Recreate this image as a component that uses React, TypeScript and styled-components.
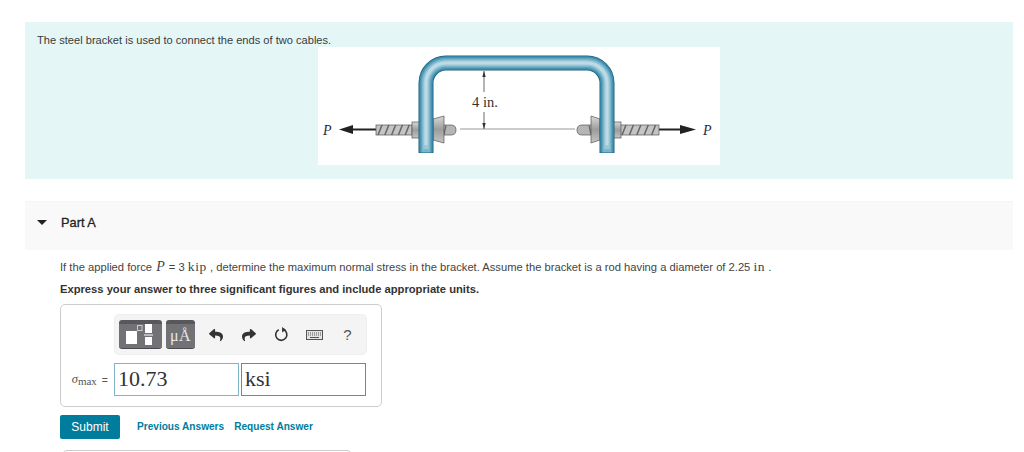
import React from "react";
import styled, { createGlobalStyle } from "styled-components";
import { FaReply, FaShare } from "react-icons/fa";

const Global = createGlobalStyle`
  html, body { margin: 0; padding: 0; background: #fff; overflow: hidden; }
  body { font-family: "Liberation Sans", Arial, sans-serif; color: #333; }
`;

const Page = styled.div`
  width: 988px;
  height: 452px;
  padding: 22px 0 0 25px;
  overflow: hidden;
`;

const Intro = styled.section`
  height: 157px;
  box-sizing: border-box;
  padding-top: 12px;
  background: #e5f6f7;
`;

const IntroText = styled.p`
  margin: 0 0 0 12px;
  font-size: 11.1px;
  line-height: 13px;
  color: #3a3a3a;
`;

const Figure = styled.svg`
  display: block;
  width: 402px;
  height: 118px;
  margin: 0 auto;
  background: #fff;
`;

const PartHeader = styled.header`
  display: flex;
  align-items: center;
  height: 49px;
  margin-top: 22px;
  background: #f9f9f9;
  border-top: 1px solid #f4f4f4;
  box-sizing: border-box;
  padding: 0 0 7px 12px;
`;

const Caret = styled.span`
  width: 0;
  height: 0;
  border-left: 5px solid transparent;
  border-right: 5px solid transparent;
  border-top: 5px solid #222;
`;

const PartTitle = styled.h2`
  margin: 0 0 0 14px;
  font-size: 12.8px;
  font-weight: 400;
  color: #222;
  -webkit-text-stroke: 0.3px #222;
`;

const PartBody = styled.div`
  padding: 10px 0 0 35px;
`;

const Question = styled.p`
  margin: 0;
  font-size: 11.2px;
  line-height: 13px;
  color: #444;
`;

const MathVar = styled.span`
  margin: 0 1px;
  font-family: "Liberation Serif", serif;
  font-style: italic;
  font-size: 14px;
`;

const MathUnit = styled.span`
  font-family: "Liberation Serif", serif;
  font-size: 13.5px;
  letter-spacing: 0.6px;
`;

const Instruction = styled.p`
  margin: 9px 0 0;
  font-size: 11.2px;
  font-weight: 700;
  line-height: 13px;
  color: #333;
`;

const Card = styled.div`
  box-sizing: border-box;
  width: 322px;
  height: 103px;
  margin-top: 8px;
  padding: 9px 13px 0 53px;
  border: 1px solid #ccc;
  border-radius: 5px;
`;

const Toolbar = styled.div`
  display: flex;
  align-items: center;
  box-sizing: border-box;
  width: 253px;
  height: 41px;
  padding: 0 4px;
  background: #f4f4f4;
  border: 1px solid #eee;
  border-radius: 5px;
`;

const TemplateButton = styled.div<{ $w: number }>`
  position: relative;
  flex: none;
  box-sizing: border-box;
  width: ${(p) => p.$w}px;
  height: 29px;
  margin-right: 4px;
  background: linear-gradient(#58585c 0, #58585c 4px, #727276 4px, #727276 100%);
  border-bottom: 1px solid #4a4a4e;
  border-radius: 3px;
  color: #eee;
  overflow: hidden;
`;

const Micro = styled.span`
  position: absolute;
  inset: 4px 0 0;
  display: flex;
  align-items: center;
  justify-content: center;
  font-family: "Liberation Serif", serif;
  font-size: 16px;
  letter-spacing: 0.5px;
  color: #e6e6e6;
`;

const Tools = styled.div`
  display: flex;
  flex: none;
  width: 165px;
`;

const Tool = styled.span`
  flex: 1;
  display: flex;
  align-items: center;
  justify-content: center;
  height: 29px;
  color: #333;
  font-size: 14px;
`;

const HelpTool = styled(Tool)`
  font-size: 15px;
  color: #555;
`;

const Answer = styled.div`
  display: flex;
  margin: 8px 0 0 -44px;
`;

const SymbolLabel = styled.span`
  flex: none;
  width: 44px;
  padding-right: 6px;
  box-sizing: border-box;
  display: flex;
  align-items: center;
  justify-content: flex-end;
  font-size: 10.5px;
  color: #555;
`;

const Sigma = styled.span`
  font-family: "Liberation Serif", serif;
  font-style: italic;
  font-size: 12.5px;
`;

const Sub = styled.span`
  font-family: "Liberation Serif", serif;
  font-size: 11px;
  margin: 3px 5px 0 0;
`;

const Field = styled.div<{ $border: string }>`
  flex: none;
  box-sizing: border-box;
  width: 125px;
  height: 33px;
  margin-right: 2px;
  padding: 0 3px;
  border: 1px solid ${(p) => p.$border};
  font-family: "Liberation Serif", serif;
  font-size: 22px;
  line-height: 29px;
  color: #333;
`;

const Actions = styled.div`
  display: flex;
  align-items: center;
  margin-top: 8px;
`;

const SubmitButton = styled.button`
  width: 60px;
  height: 24px;
  padding: 0;
  border: 0;
  border-radius: 2px;
  background: #007c9d;
  color: #fff;
  font: 12px "Liberation Sans", Arial, sans-serif;
`;

const ActionLink = styled.a<{ $gap: number }>`
  margin-left: ${(p) => p.$gap}px;
  padding-bottom: 2px;
  font-size: 10.1px;
  font-weight: 700;
  color: #007c9d;
`;

const NextCard = styled.div`
  width: 288px;
  height: 10px;
  margin: 11px 0 0 2px;
  border: 1px solid #ccc;
  border-radius: 5px 5px 0 0;
`;

const Bolt = ({ x, w }: { x: number; w: number }) => (
  <g>
    <rect x={x} y={78} width={w} height={10} fill="#c4c4c4" stroke="#555" strokeWidth={0.7} />
    {Array.from({ length: 5 }).map((_, i) => (
      <path
        key={i}
        d={`M${x + 2 + (i * (w - 2)) / 5} 88L${x + 6 + (i * (w - 2)) / 5} 78`}
        stroke="#666"
        strokeWidth={1.5}
      />
    ))}
  </g>
);

const arch = (end: number) => `M108 ${end}V36A20 20 0 0 1 128 16H269A20 20 0 0 1 289 36V${end}`;

const Arch = () => (
  <g fill="none">
    <path d={arch(106)} stroke="#1f5f7c" strokeWidth={15} />
    <path d={arch(105.5)} stroke="#3f8fae" strokeWidth={13.4} />
    <path d={arch(105.5)} stroke="#5fa3bd" strokeWidth={10.5} />
    <path d={arch(105)} stroke="#7db6cb" strokeWidth={8} />
    <path d={arch(102)} stroke="#9cc9d8" strokeWidth={5.5} />
    <path d={arch(98)} stroke="#bcdbe6" strokeWidth={3} />
  </g>
);

const BracketFigure = () => (
  <Figure viewBox="0 0 402 118">
    <defs>
      <linearGradient id="nutGrad" x1="0" y1="0" x2="0" y2="1">
        <stop offset="0" stopColor="#d8d8d8" />
        <stop offset="0.5" stopColor="#9c9c9c" />
        <stop offset="1" stopColor="#c4c4c4" />
      </linearGradient>
    </defs>
    <path d="M21 82.5L35 78V81.5H58V83.5H35V87Z" fill="#222" />
    <Bolt x={58} w={36} />
    <path d="M378 82.5L362 78V81.5H341V83.5H362V87Z" fill="#222" />
    <Bolt x={302} w={39} />
    <path d="M115 78H133Q138 78 138 83Q138 88 133 88H115Z" fill="#b5b5b5" stroke="#555" strokeWidth={0.7} />
    <path d="M282 78H264Q259 78 259 83Q259 88 264 88H282Z" fill="#b5b5b5" stroke="#555" strokeWidth={0.7} />
    <path d="M128 78.5L126 87.5M271 78.5L273 87.5" stroke="#666" strokeWidth={1.2} />
    <rect x={94} y={75} width={8} height={16} fill="url(#nutGrad)" stroke="#555" strokeWidth={0.7} />
    <path d="M115 72L126 69V96L115 93Z" fill="url(#nutGrad)" stroke="#555" strokeWidth={0.7} />
    <rect x={295} y={75} width={8} height={16} fill="url(#nutGrad)" stroke="#555" strokeWidth={0.7} />
    <path d="M282 72L273 69V96L282 93Z" fill="url(#nutGrad)" stroke="#555" strokeWidth={0.7} />
    <Arch />
    <path d="M142 82H257" stroke="#999" strokeWidth={1} />
    <path d="M166 24V45M166 65V82" stroke="#444" strokeWidth={0.8} />
    <path d="M166 24L164.3 30H167.7ZM166 82L164.3 76H167.7Z" fill="#333" />
    <text x={154} y={59.5} fontFamily="Liberation Serif, serif" fontSize={14.5} fill="#333">4 in.</text>
    <text x={5} y={88} fontFamily="Liberation Serif, serif" fontStyle="italic" fontSize={14} fill="#1d2a44">P</text>
    <text x={385} y={88} fontFamily="Liberation Serif, serif" fontStyle="italic" fontSize={14} fill="#1d2a44">P</text>
  </Figure>
);

const TemplatesGlyph = () => (
  <svg width="43" height="29" viewBox="0 0 43 29" style={{ display: "block" }}>
    <rect x="7" y="11" width="11" height="13" fill="#fff" />
    <rect x="18.5" y="5.5" width="4.5" height="5" fill="none" stroke="#ccc" />
    <rect x="26" y="4" width="7" height="9" fill="#fff" />
    <rect x="25" y="14.5" width="9" height="1" fill="#fff" />
    <rect x="26" y="17" width="7" height="8" fill="#fff" />
  </svg>
);

const ResetGlyph = () => (
  <svg width="15" height="15" viewBox="0 0 15 15" fill="none">
    <path d="M9.5 2.6A5.6 5.6 0 1 1 4.8 2.7" stroke="#333" strokeWidth="1.6" />
    <path d="M8 0L12 2.7L8.2 5.4Z" fill="#333" />
  </svg>
);

const KeyboardGlyph = () => (
  <svg width="17" height="10" viewBox="0 0 17 10">
    <rect x="0.5" y="0.5" width="16" height="9" fill="#e4e4e4" stroke="#555" />
    <path d="M2 3H15M2 5H15" stroke="#555" strokeDasharray="1 1" />
    <path d="M4 7.5H13" stroke="#555" />
  </svg>
);

export default function App() {
  return (
    <Page>
      <Global />
      <Intro>
        <IntroText>The steel bracket is used to connect the ends of two cables.</IntroText>
        <BracketFigure />
      </Intro>
      <PartHeader>
        <Caret />
        <PartTitle>Part A</PartTitle>
      </PartHeader>
      <PartBody>
        <Question>
          If the applied force <MathVar>P</MathVar> = 3 <MathUnit>kip</MathUnit> , determine the maximum normal
          stress in the bracket. Assume the bracket is a rod having a diameter of 2.25 <MathUnit>in</MathUnit> .
        </Question>
        <Instruction>Express your answer to three significant figures and include appropriate units.</Instruction>
        <Card>
          <Toolbar>
            <TemplateButton $w={43}>
              <TemplatesGlyph />
            </TemplateButton>
            <TemplateButton $w={29}>
              <Micro>μÅ</Micro>
            </TemplateButton>
            <Tools>
              <Tool><FaReply /></Tool>
              <Tool><FaShare /></Tool>
              <Tool><ResetGlyph /></Tool>
              <Tool><KeyboardGlyph /></Tool>
              <HelpTool>?</HelpTool>
            </Tools>
          </Toolbar>
          <Answer>
            <SymbolLabel>
              <Sigma>σ</Sigma>
              <Sub>max</Sub>=
            </SymbolLabel>
            <Field $border="#7fb4c6">10.73</Field>
            <Field $border="#4f94aa">ksi</Field>
          </Answer>
        </Card>
        <Actions>
          <SubmitButton>Submit</SubmitButton>
          <ActionLink $gap={17}>Previous Answers</ActionLink>
          <ActionLink $gap={10}>Request Answer</ActionLink>
        </Actions>
        <NextCard />
      </PartBody>
    </Page>
  );
}
